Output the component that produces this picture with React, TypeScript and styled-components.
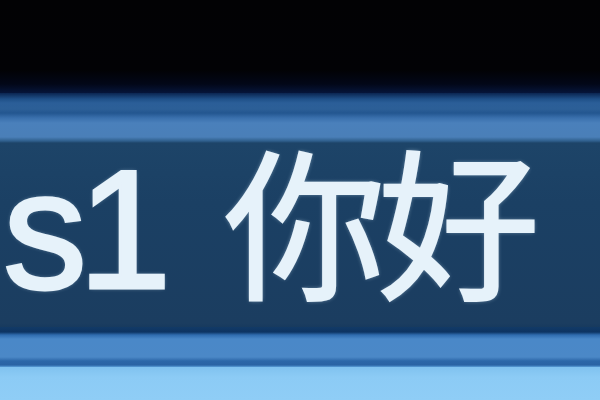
import React from 'react';
import styled, { createGlobalStyle } from 'styled-components';

const GlobalStyle = createGlobalStyle`
  html, body {
    margin: 0;
    padding: 0;
    background: #000;
  }
`;

const App: React.FC = () => {
  return (
    <Screen>
      <GlobalStyle />
      <TopShade />
      <UpperFrame />
      <Panel>
        <Caption>
          s1 <Cjk>你好</Cjk>
        </Caption>
      </Panel>
      <LowerFrame />
      <Glow />
    </Screen>
  );
};

export default App;

const Screen = styled.div`
  width: 600px;
  height: 400px;
  display: flex;
  flex-direction: column;
  overflow: hidden;
  background: #000;
`;

const TopShade = styled.div`
  height: 93px;
  flex: none;
  background: linear-gradient(
    to bottom,
    #020204 0px,
    #020205 70px,
    #020718 84px,
    #06153a 93px
  );
`;

const UpperFrame = styled.div`
  height: 50px;
  flex: none;
  background: linear-gradient(
    to bottom,
    #0b2550 0px,
    #1f5088 6px,
    #2b5e98 10px,
    #2c5f97 16px,
    #235690 20px,
    #3a70ad 25px,
    #4a80bb 30px,
    #4a7fb8 44px,
    #2f5f8c 48px,
    #1d4468 50px
  );
`;

const Panel = styled.div`
  height: 184px;
  flex: none;
  display: flex;
  align-items: flex-start;
  box-sizing: border-box;
  background: linear-gradient(
    to bottom,
    #1d4468 0px,
    #1b4064 60px,
    #1b3d60 180px,
    #173a5e 184px
  );
  overflow: hidden;
`;

const Caption = styled.div`
  font-family: 'Liberation Sans', Arial, sans-serif;
  font-weight: 400;
  font-size: 168px;
  line-height: 150px;
  color: #e6f2fa;
  -webkit-text-stroke: 3px #e6f2fa;
  letter-spacing: -9px;
  white-space: nowrap;
  text-indent: 3px;
  text-shadow: 0 0 4px rgba(220, 240, 255, 0.6);
`;

const Cjk = styled.span`
  font-family: 'Noto Sans CJK SC', 'Liberation Sans', sans-serif;
  font-weight: 400;
  -webkit-text-stroke: 2px #e6f2fa;
  font-size: 162px;
  letter-spacing: -8px;
  margin-left: 24px;
`;

const LowerFrame = styled.div`
  height: 40px;
  flex: none;
  background: linear-gradient(
    to bottom,
    #123a66 0px,
    #0d3463 5px,
    #2f6caf 8px,
    #4a88c8 12px,
    #4b88c7 30px,
    #2c67a8 34px,
    #2a63a4 38px,
    #5a9ed8 40px
  );
`;

const Glow = styled.div`
  flex: 1;
  background: linear-gradient(to bottom, #80c2ef 0px, #8ccbf5 10px, #8fcdf6 33px);
`;
